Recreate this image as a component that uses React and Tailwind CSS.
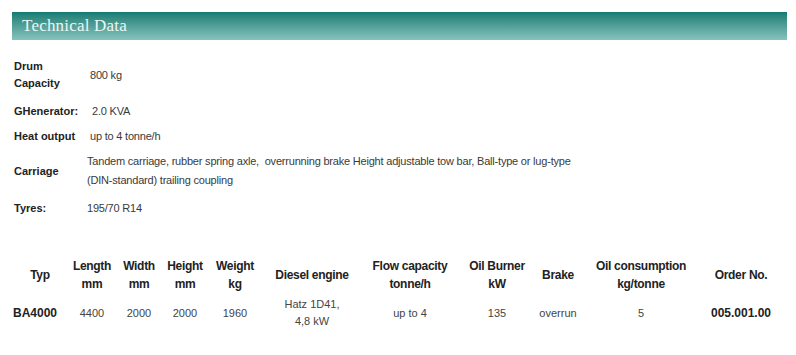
const SPECS = [
  { label: ["Drum", "Capacity"], value: ["800 kg"], h: "h-[48px]", lw: "w-[76px]" },
  { label: ["GHenerator:"], value: ["2.0 KVA"], h: "h-[24px]", lw: "w-[78px]" },
  { label: ["Heat output"], value: ["up to 4 tonne/h"], h: "h-[26px]", lw: "w-[76px]" },
  {
    label: ["Carriage"],
    value: [
      "Tandem carriage, rubber spring axle,  overrunning brake Height adjustable tow bar, Ball-type or lug-type",
      "(DIN-standard) trailing coupling",
    ],
    h: "h-[44px]",
    lw: "w-[73px]",
  },
  { label: ["Tyres:"], value: ["195/70 R14"], h: "h-[30px]", lw: "w-[73px]" },
];

const COLS = [
  { head: ["Typ"], w: "w-[52px]", val: ["BA4000"], bold: true, shift: "pr-[10px]" },
  { head: ["Length", "mm"], w: "w-[52px]", val: ["4400"] },
  { head: ["Width", "mm"], w: "w-[42px]", val: ["2000"] },
  { head: ["Height", "mm"], w: "w-[50px]", val: ["2000"] },
  { head: ["Weight", "kg"], w: "w-[50px]", val: ["1960"] },
  { head: ["Diesel engine"], w: "w-[104px]", val: ["Hatz 1D41,", "4,8 kW"] },
  { head: ["Flow capacity", "tonne/h"], w: "w-[92px]", val: ["up to 4"] },
  { head: ["Oil Burner", "kW"], w: "w-[82px]", val: ["135"] },
  { head: ["Brake"], w: "w-[40px]", val: ["overrun"] },
  { head: ["Oil consumption", "kg/tonne"], w: "w-[126px]", val: ["5"] },
  { head: ["Order No."], w: "w-[74px]", val: ["005.001.00"], bold: true },
];

export default function App() {
  return (
    <div className="w-[796px] h-[355px] bg-white font-['Liberation_Sans',Arial,sans-serif] overflow-hidden">
      {/* Header bar */}
      <div className="pt-[12px] pl-[12px] pr-[9px]">
        <div className="h-[28px] bg-gradient-to-b from-[#0e7c73] to-[#86c4bd] flex items-center pl-[10px]">
          <span className="font-['Liberation_Serif',serif] text-[17px] tracking-[0.2px] text-[#eaf7f5]">
            Technical Data
          </span>
        </div>
      </div>

      {/* Spec list */}
      <div className="pl-[14px] pt-[11px]">
        {SPECS.map((s, i) => (
          <div key={i} className={`flex items-center ${s.h}`}>
            <div className={`${s.lw} shrink-0 font-bold text-[11px] leading-[17px] text-[#222]`}>
              {s.label.map((l) => (
                <div key={l}>{l}</div>
              ))}
            </div>
            <div className="text-[11px] leading-[19px] tracking-[-0.2px] text-[#3a3a3a] whitespace-pre">
              {s.value.map((v) => (
                <div key={v}>{v}</div>
              ))}
            </div>
          </div>
        ))}
      </div>

      {/* Table */}
      <div className="pl-[14px] pt-[32px] flex">
        {COLS.map((c, i) => (
          <div key={i} className={`${c.w} shrink-0 flex flex-col items-center`}>
            <div className="h-[40px] flex flex-col justify-center items-center font-bold text-[12px] leading-[18px] tracking-[-0.3px] text-[#222] whitespace-nowrap">
              {c.head.map((h) => (
                <div key={h}>{h}</div>
              ))}
            </div>
            <div
              className={`h-[36px] flex flex-col justify-center items-center leading-[17px] whitespace-nowrap ${c.shift || ""} ${
                c.bold ? "font-bold text-[12px] text-[#222]" : "text-[11px] text-[#444]"
              }`}
            >
              {c.val.map((v) => (
                <div key={v}>{v}</div>
              ))}
            </div>
          </div>
        ))}
      </div>
    </div>
  );
}
